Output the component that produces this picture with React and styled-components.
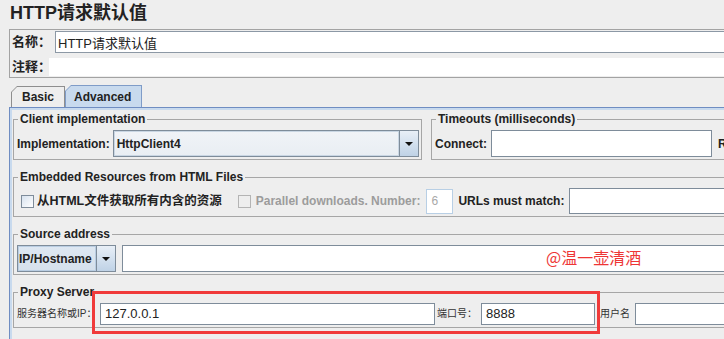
import styled, { createGlobalStyle } from 'styled-components'

const GlobalStyle = createGlobalStyle`
  html, body {
    margin: 0;
    padding: 0;
    background: #eeeeee;
    overflow: hidden;
  }
  body {
    font-family: "Liberation Sans", "Noto Sans CJK SC", sans-serif;
    font-size: 12px;
    color: #333333;
  }
  * {
    box-sizing: border-box;
  }
`

const Page = styled.div`
  width: 1000px;
  height: 339px;
  background: #eeeeee;
`

const Title = styled.h1`
  margin: 0;
  height: 29px;
  padding: 2px 0 0 10px;
  font-size: 18px;
  line-height: 22px;
  font-weight: bold;
  color: #222222;
`

const NamePanel = styled.div`
  margin-left: 9px;
  height: 49px;
  border: 1px solid #a3a3a3;
  border-right: none;
  padding: 1px 0 1px 2px;
  display: flex;
  flex-direction: column;
  gap: 5px;
`

const NameRow = styled.div`
  display: flex;
  align-items: center;
  height: ${({ $h }) => $h}px;
  flex: none;
`

const NameLabel = styled.span`
  width: ${({ $w }) => $w}px;
  flex: none;
  white-space: nowrap;
  font-size: 13px;
  line-height: 16px;
  font-weight: bold;
  color: #222222;
`

const NameField = styled.div`
  flex: 1;
  height: 100%;
  display: flex;
  align-items: center;
  padding-left: 2px;
  background: #ffffff;
  border: ${({ $bare }) => ($bare ? 'none' : '1px solid #8c98a5')};
  border-right: none;
  font-size: 13px;
  color: #222222;
`

const TabsRow = styled.div`
  display: flex;
  align-items: flex-end;
  margin: 7px 0 0 11px;
  height: 22px;
`

const Tab = styled.div`
  width: ${({ $w }) => $w}px;
  height: ${({ $active }) => ($active ? 22 : 21)}px;
  padding: 1px 1px 0 1px;
  background: ${({ $active }) => ($active ? '#7f9cc8' : '#8e8e8e')};
  clip-path: polygon(0 6px, 6px 0, 100% 0, 100% 100%, 0 100%);
`

const TabFace = styled.div`
  height: 100%;
  display: flex;
  align-items: center;
  padding-left: ${({ $pad }) => $pad}px;
  background: ${({ $active }) => ($active ? '#c8daee' : '#eeeeee')};
  clip-path: polygon(0 5px, 5px 0, 100% 0, 100% 100%, 0 100%);
  font-weight: bold;
  font-size: 12px;
  color: #222222;
`

const TabContent = styled.div`
  margin-left: 9px;
  height: 232px;
  border-top: 1px solid #6f8dc2;
  border-left: 1px solid #6f8dc2;
  box-shadow: inset 2px 2px 0 #c8daee;
  padding: 4px 0 0 3px;
  display: flex;
  flex-direction: column;
  gap: 10px;
`

const GroupRow = styled.div`
  display: flex;
  gap: 9px;
  flex: none;
`

const Group = styled.fieldset`
  margin: 0;
  min-width: 0;
  height: ${({ $h }) => $h}px;
  border: 1px solid #a6a6a6;
  padding: 4px 2px 2px 3px;
  width: ${({ $w }) => ($w ? `${$w}px` : 'auto')};
  flex: ${({ $grow }) => ($grow ? '1 1 0' : 'none')};
  overflow: hidden;
`

const Legend = styled.legend`
  margin-left: 1px;
  padding: 0 2px;
  height: 14px;
  font-size: 12px;
  line-height: 14px;
  font-weight: bold;
  color: #222222;
`

const Row = styled.div`
  display: flex;
  align-items: center;
  height: ${({ $h }) => $h}px;
`

const Label = styled.span`
  flex: none;
  font-size: 12px;
  line-height: 14px;
  font-weight: bold;
  color: ${({ $disabled }) => ($disabled ? '#9c9c9c' : '#222222')};
  margin-left: ${({ $ml }) => $ml || 0}px;
  margin-right: ${({ $mr }) => $mr || 0}px;
`

const CjkLabel = styled.span`
  flex: none;
  font-size: 12.5px;
  line-height: 16px;
  font-weight: bold;
  color: #222222;
  margin-left: 3px;
`

const SmallLabel = styled.span`
  flex: none;
  width: ${({ $w }) => $w}px;
  padding-left: ${({ $pl }) => $pl || 0}px;
  font-size: 10px;
  line-height: 14px;
  color: #333333;
  white-space: nowrap;
`

const Field = styled.div`
  position: relative;
  height: ${({ $h }) => ($h ? `${$h}px` : '100%')};
  width: ${({ $w }) => ($w ? `${$w}px` : 'auto')};
  flex: ${({ $w }) => ($w ? 'none' : '1')};
  margin-left: ${({ $ml }) => $ml || 0}px;
  display: flex;
  align-items: center;
  padding-left: 4px;
  background: #ffffff;
  border: 1px solid ${({ $disabled }) => ($disabled ? '#b8cfe5' : '#7e8c9a')};
  font-size: ${({ $fs }) => $fs || 12}px;
  line-height: 16px;
  color: ${({ $disabled }) => ($disabled ? '#a8a8a8' : '#222222')};
`

const Combo = styled.div`
  display: flex;
  height: 100%;
  width: ${({ $w }) => ($w ? `${$w}px` : 'auto')};
  flex: ${({ $w }) => ($w ? 'none' : '1')};
  border: 1px solid #7e8c9a;
`

const ComboValue = styled.div`
  flex: 1;
  display: flex;
  align-items: center;
  padding-left: ${({ $blue }) => ($blue ? 0 : 2)}px;
  border: 1px solid ${({ $blue }) => ($blue ? '#b9cde2' : '#c9d6e3')};
  background: ${({ $blue }) =>
    $blue ? 'linear-gradient(#dde7f2, #d6e1ec)' : 'linear-gradient(#f0f3f7, #e9eef3)'};
  font-size: 12px;
  line-height: 14px;
  font-weight: bold;
  color: #222222;
  white-space: nowrap;
`

const ComboButton = styled.div`
  width: 19px;
  flex: none;
  display: flex;
  align-items: center;
  justify-content: center;
  border-left: 1px solid #7e8c9a;
  background: linear-gradient(#e8eff7, #bfd2e6);
`

const Arrow = styled.span`
  width: 0;
  height: 0;
  border-left: 4px solid transparent;
  border-right: 4px solid transparent;
  border-top: 4px solid #111111;
`

const Check = styled.span`
  flex: none;
  width: 13px;
  height: 13px;
  margin-left: ${({ $ml }) => $ml}px;
  border: 1px solid ${({ $disabled }) => ($disabled ? '#b4b4b4' : '#7e8c9a')};
  background: ${({ $disabled }) =>
    $disabled ? '#eeeeee' : 'linear-gradient(135deg, #d7e2ee, #ffffff)'};
`

const Watermark = styled.span`
  position: absolute;
  left: 423px;
  top: 3px;
  font-family: "Noto Sans CJK SC", sans-serif;
  font-size: 16px;
  line-height: 16px;
  color: #ee3535;
  white-space: nowrap;
`

const ProxyWrap = styled.div`
  position: relative;
  flex: none;
  display: flex;
`

const Highlight = styled.div`
  position: absolute;
  left: 79px;
  top: 6px;
  width: 508px;
  height: 43px;
  border: 3px solid #f03a3a;
  pointer-events: none;
`

const App = () => (
  <Page>
    <GlobalStyle />
    <Title>HTTP请求默认值</Title>

    <NamePanel>
      <NameRow $h={22}>
        <NameLabel $w={43}>名称：</NameLabel>
        <NameField>HTTP请求默认值</NameField>
      </NameRow>
      <NameRow $h={18}>
        <NameLabel $w={37}>注释：</NameLabel>
        <NameField $bare />
      </NameRow>
    </NamePanel>

    <TabsRow>
      <Tab $w={54}>
        <TabFace $pad={10}>Basic</TabFace>
      </Tab>
      <Tab $w={77} $active>
        <TabFace $pad={8} $active>Advanced</TabFace>
      </Tab>
    </TabsRow>

    <TabContent>
      <GroupRow>
        <Group $w={409} $h={48}>
          <Legend>Client implementation</Legend>
          <Row $h={27}>
            <Label $mr={3}>Implementation:</Label>
            <Combo>
              <ComboValue>HttpClient4</ComboValue>
              <ComboButton>
                <Arrow />
              </ComboButton>
            </Combo>
          </Row>
        </Group>
        <Group $h={48} $grow>
          <Legend>Timeouts (milliseconds)</Legend>
          <Row $h={27}>
            <Label>Connect:</Label>
            <Field $w={221} $ml={4} />
            <Label $ml={6}>Read:</Label>
            <Field $ml={4} />
          </Row>
        </Group>
      </GroupRow>

      <Group $h={47}>
        <Legend>Embedded Resources from HTML Files</Legend>
        <Row $h={26}>
          <Check $ml={4} />
          <CjkLabel>从HTML文件获取所有内含的资源</CjkLabel>
          <Check $ml={16} $disabled />
          <Label $ml={5} $disabled>Parallel downloads. Number:</Label>
          <Field $w={27} $h={25} $ml={6} $disabled>6</Field>
          <Label $ml={5}>URLs must match:</Label>
          <Field $ml={5} />
        </Row>
      </Group>

      <Group $h={48}>
        <Legend>Source address</Legend>
        <Row $h={27}>
          <Combo $w={99}>
            <ComboValue $blue>IP/Hostname</ComboValue>
            <ComboButton>
              <Arrow />
            </ComboButton>
          </Combo>
          <Field $ml={6}>
            <Watermark>@温一壶清酒</Watermark>
          </Field>
        </Row>
      </Group>

      <ProxyWrap>
        <Group $h={43} $grow>
          <Legend>Proxy Server</Legend>
          <Row $h={22}>
            <SmallLabel $w={83}>服务器名称或IP：</SmallLabel>
            <Field $w={335} $fs={13}>127.0.0.1</Field>
            <SmallLabel $w={46} $pl={2}>端口号：</SmallLabel>
            <Field $w={114} $fs={13}>8888</Field>
            <SmallLabel $w={40} $pl={5}>用户名</SmallLabel>
            <Field />
          </Row>
        </Group>
        <Highlight />
      </ProxyWrap>
    </TabContent>
  </Page>
)

export default App
